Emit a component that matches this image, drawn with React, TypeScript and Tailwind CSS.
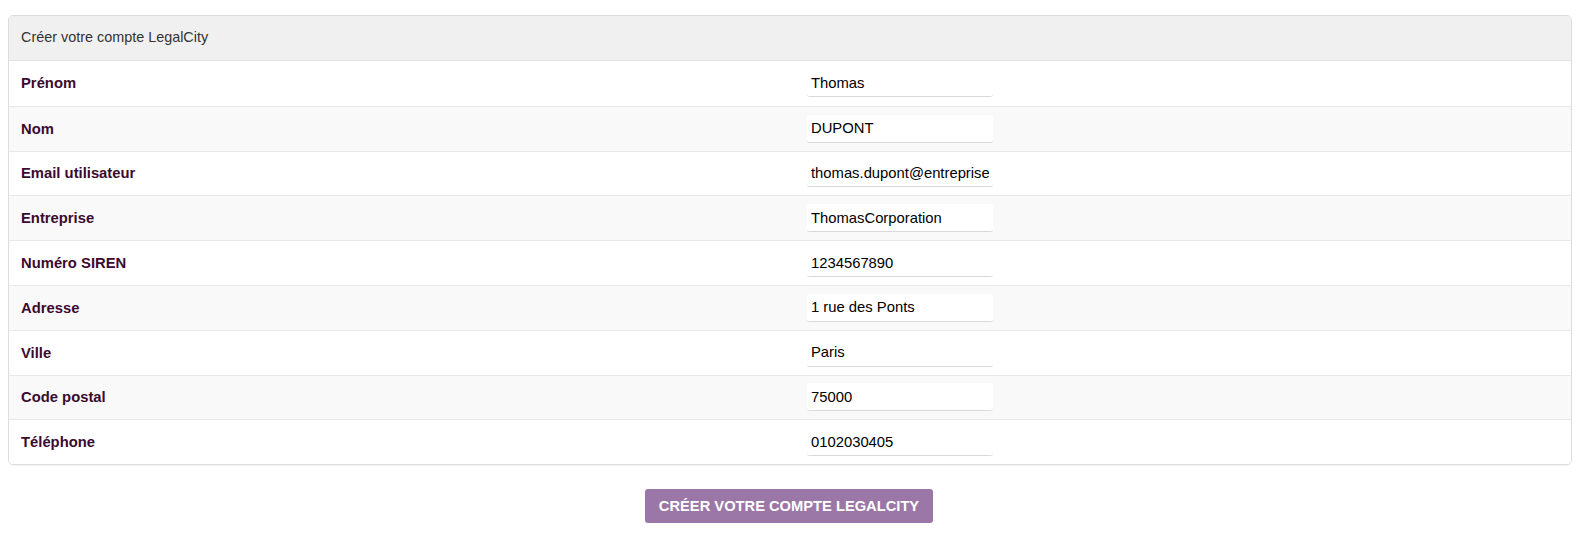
const fields: [string, string][] = [
  ["Prénom", "Thomas"],
  ["Nom", "DUPONT"],
  ["Email utilisateur", "thomas.dupont@entreprise.fr"],
  ["Entreprise", "ThomasCorporation"],
  ["Numéro SIREN", "1234567890"],
  ["Adresse", "1 rue des Ponts"],
  ["Ville", "Paris"],
  ["Code postal", "75000"],
  ["Téléphone", "0102030405"],
];

export default function App() {
  return (
    <div
      className="min-h-[536px] bg-white px-2 pt-[15px] text-[14px]"
      style={{ fontFamily: '"Liberation Sans", Arial, sans-serif' }}
    >
      <div className="overflow-hidden rounded-[5px] border border-[#dddddd] shadow-[0_1px_1px_rgba(0,0,0,0.05)]">
        <div className="flex h-[45px] items-center border-b border-[#e5e5e5] bg-[#f0f0f0] px-3 text-[14.4px] text-[#333333]">
          Créer votre compte LegalCity
        </div>
        {fields.map(([label, value], i) => (
          <div
            key={label}
            className={
              "grid h-[44.8px] grid-cols-[798px_1fr] items-center " +
              (i > 0 ? "border-t border-[#e8e8e8] " : "") +
              (i % 2 === 1 ? "bg-[#f9f9f9]" : "bg-white")
            }
          >
            <div className="pl-3 text-[14.8px] font-bold text-[#3b0a2f]">{label}</div>
            <div>
              <input
                readOnly
                value={value}
                className="h-[28px] w-[186px] rounded-[3px] border-b border-[#d9d9d9] bg-white px-1 text-[14.8px] text-black outline-none"
                style={{ fontFamily: '"Liberation Sans", Arial, sans-serif' }}
              />
            </div>
          </div>
        ))}
      </div>
      <div className="flex justify-center pt-[24px]">
        <button className="ml-[-2px] h-[34px] w-[288px] rounded-[3px] bg-[#9b77a8] text-[14.7px] font-bold uppercase text-white">
          Créer votre compte LegalCity
        </button>
      </div>
    </div>
  );
}
